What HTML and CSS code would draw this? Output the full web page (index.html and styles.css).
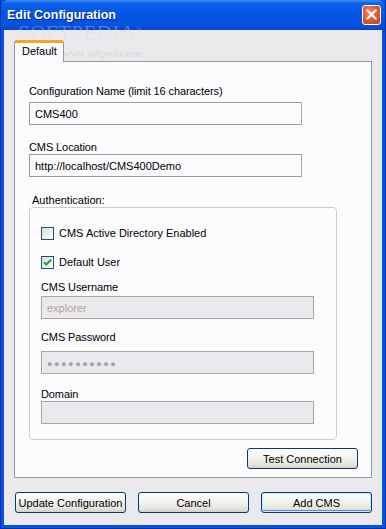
FILE: index.html
```html
<!DOCTYPE html>
<html lang="en">
<head>
  <meta charset="UTF-8">
  <title>Edit Configuration</title>
  <link rel="stylesheet" href="styles.css">
</head>
<body>
  <div class="window">
    <!-- Title bar -->
    <div class="titlebar">
      <span class="title">Edit Configuration</span>
      <span class="close">
        <svg width="11" height="11" viewBox="0 0 11 11">
          <path d="M1.5 1.5 L9.5 9.5 M9.5 1.5 L1.5 9.5" stroke="#fff" stroke-width="2.2" stroke-linecap="square"/>
        </svg>
      </span>
    </div>

    <div class="client">
      <div class="tabs">
        <div class="tab">Default</div>
      </div>

      <div class="panel">
        <label class="field-label first">Configuration Name (limit 16 characters)</label>
        <div class="input">CMS400</div>

        <label class="field-label loc">CMS Location</label>
        <div class="input">http://localhost/CMS400Demo</div>

        <div class="auth-label">Authentication:</div>
        <div class="group">
          <div class="check-row first">
            <span class="checkbox"></span>
            <span>CMS Active Directory Enabled</span>
          </div>
          <div class="check-row second">
            <span class="checkbox">
              <svg width="9" height="9" viewBox="0 0 9 9">
                <path d="M1 4.2 L3.3 6.5 L8 1.8" fill="none" stroke="#21A121" stroke-width="2"/>
              </svg>
            </span>
            <span>Default User</span>
          </div>

          <label class="field-label user">CMS Username</label>
          <div class="input disabled">explorer</div>

          <label class="field-label pass">CMS Password</label>
          <div class="input disabled dots">●●●●●●●●●●</div>

          <label class="field-label domain">Domain</label>
          <div class="input disabled"></div>
        </div>

        <div class="test-row">
          <button class="btn">Test Connection</button>
        </div>
      </div>

      <div class="actions">
        <button class="btn">Update Configuration</button>
        <button class="btn">Cancel</button>
        <button class="btn default">Add CMS</button>
      </div>
    </div>

    <!-- screenshot watermark -->
    <div class="mark-big">SOFTPEDIA<sup>™</sup></div>
    <div class="mark-small">www.softpedia.com</div>
  </div>
</body>
</html>
```

FILE: styles.css
```css
body {
  margin: 0;
  font-family: "Liberation Sans", Arial, sans-serif;
  font-size: 11px;
  color: #000;
  background: #fff;
}
.window {
  position: relative;
  width: 386px;
  height: 529px;
  box-sizing: border-box;
  background: #0553e0;
  border: 1px solid #0831a8;
  border-top: none;
  display: flex;
  flex-direction: column;
  overflow: hidden;
}
.titlebar {
  height: 30px;
  flex: none;
  display: flex;
  align-items: center;
  justify-content: space-between;
  padding: 0 4px 0 6px;
  background: linear-gradient(#3d8cf7 0%, #0a5fea 12%, #0256e4 45%, #0553e0 85%, #0843c6 100%);
  border-radius: 7px 7px 0 0;
}
.title {
  color: #fff;
  font-family: "Liberation Sans", Arial, sans-serif;
  font-weight: bold;
  font-size: 12.5px;
  margin-top: -1px;
  text-shadow: 1px 1px 0 #0a1e8c;
}
.close {
  width: 19px;
  height: 20px;
  box-sizing: border-box;
  border: 1px solid #fff;
  border-radius: 3px;
  background: radial-gradient(circle at 40% 35%, #ef8a6a 0%, #e25b35 45%, #c8401f 100%);
  display: flex;
  align-items: center;
  justify-content: center;
  margin-top: -1px;
}
.client {
  flex: 1;
  margin: 0 3px 3px;
  background: #ece9ec;
  padding: 10px 10px 0 10px;
}
.tabs {
  display: flex;
}
.tab {
  width: 50px;
  height: 22px;
  box-sizing: border-box;
  background: #fcfcfe;
  border: 1px solid #919b9c;
  border-top: 3px solid #f5a623;
  border-bottom: none;
  border-radius: 3px 3px 0 0;
  padding: 2px 0 0 7px;
  position: relative;
  z-index: 1;
  margin-bottom: -1px;
}
.panel {
  width: 358px;
  height: 417px;
  box-sizing: border-box;
  background: #fcfcfe;
  border: 1px solid #919b9c;
  border-right-color: #7f9db9;
  padding: 0 14px;
}
.field-label {
  display: block;
  line-height: 14px;
  letter-spacing: -0.1px;
}
.field-label.first { margin-top: 22px; margin-bottom: 4px; }
.field-label.loc { margin-top: 15px; }
.input {
  width: 273px;
  height: 23px;
  box-sizing: border-box;
  border: 1px solid #9c9c9c;
  border-right-color: #a5a5a5;
  background: #fcfcfe;
  padding: 4px 5px 0;
  line-height: 14px;
  white-space: nowrap;
}
.auth-label {
  margin: 16px 0 0 3px;
  line-height: 14px;
}
.group {
  width: 308px;
  height: 233px;
  box-sizing: border-box;
  border: 1px solid #d0d0bf;
  border-radius: 4px;
  padding: 0 11px;
}
.check-row {
  display: flex;
  align-items: center;
  gap: 5px;
  line-height: 14px;
}
.check-row.first { margin-top: 18px; }
.check-row.second { margin-top: 15px; }
.checkbox {
  width: 13px;
  height: 13px;
  box-sizing: border-box;
  border: 1px solid #1c5180;
  background: linear-gradient(135deg, #dcdcd6 0%, #f4f4f0 70%, #fff 100%);
  display: flex;
  align-items: center;
  justify-content: center;
}
.field-label.user { margin-top: 11px; margin-bottom: 2px; }
.field-label.pass { margin-top: 11px; margin-bottom: 7px; }
.field-label.domain { margin-top: 13px; }
.input.disabled {
  background: #ebe9ed;
  border-color: #aca899;
  color: #aca899;
}
.input.dots {
  font-size: 9px;
  letter-spacing: 1.6px;
  color: #a2a2a2;
  padding: 5px 0 0 5px;
}
.test-row {
  display: flex;
  justify-content: flex-end;
  margin: 8px -1px 0 0;
}
.btn {
  width: 111px;
  height: 21px;
  box-sizing: border-box;
  font-family: "Liberation Sans", Arial, sans-serif;
  font-size: 11px;
  color: #000;
  border: 1px solid #003c74;
  border-radius: 3px;
  background: linear-gradient(#ffffff 0%, #f4f4f0 40%, #e6e5df 80%, #d6d0c5 100%);
  padding: 0;
  white-space: nowrap;
}
.btn.default {
  box-shadow: inset 0 0 0 1px #cee7ff, inset 0 -1px 0 1px #6982ee;
}
.actions {
  display: flex;
  gap: 12px;
  margin: 14px 0 0 1px;
}
.mark-big {
  position: absolute;
  left: 17px;
  top: 22px;
  line-height: 16px;
  font-family: "Liberation Serif", serif;
  font-size: 21px;
  color: rgba(220, 220, 235, 0.35);
  letter-spacing: 0.5px;
  pointer-events: none;
}
.mark-big sup {
  font-size: 6px;
}
.mark-small {
  position: absolute;
  left: 62px;
  top: 49px;
  line-height: 10px;
  font-family: "Liberation Serif", serif;
  font-size: 10px;
  color: rgba(140, 140, 160, 0.25);
  pointer-events: none;
}
```
